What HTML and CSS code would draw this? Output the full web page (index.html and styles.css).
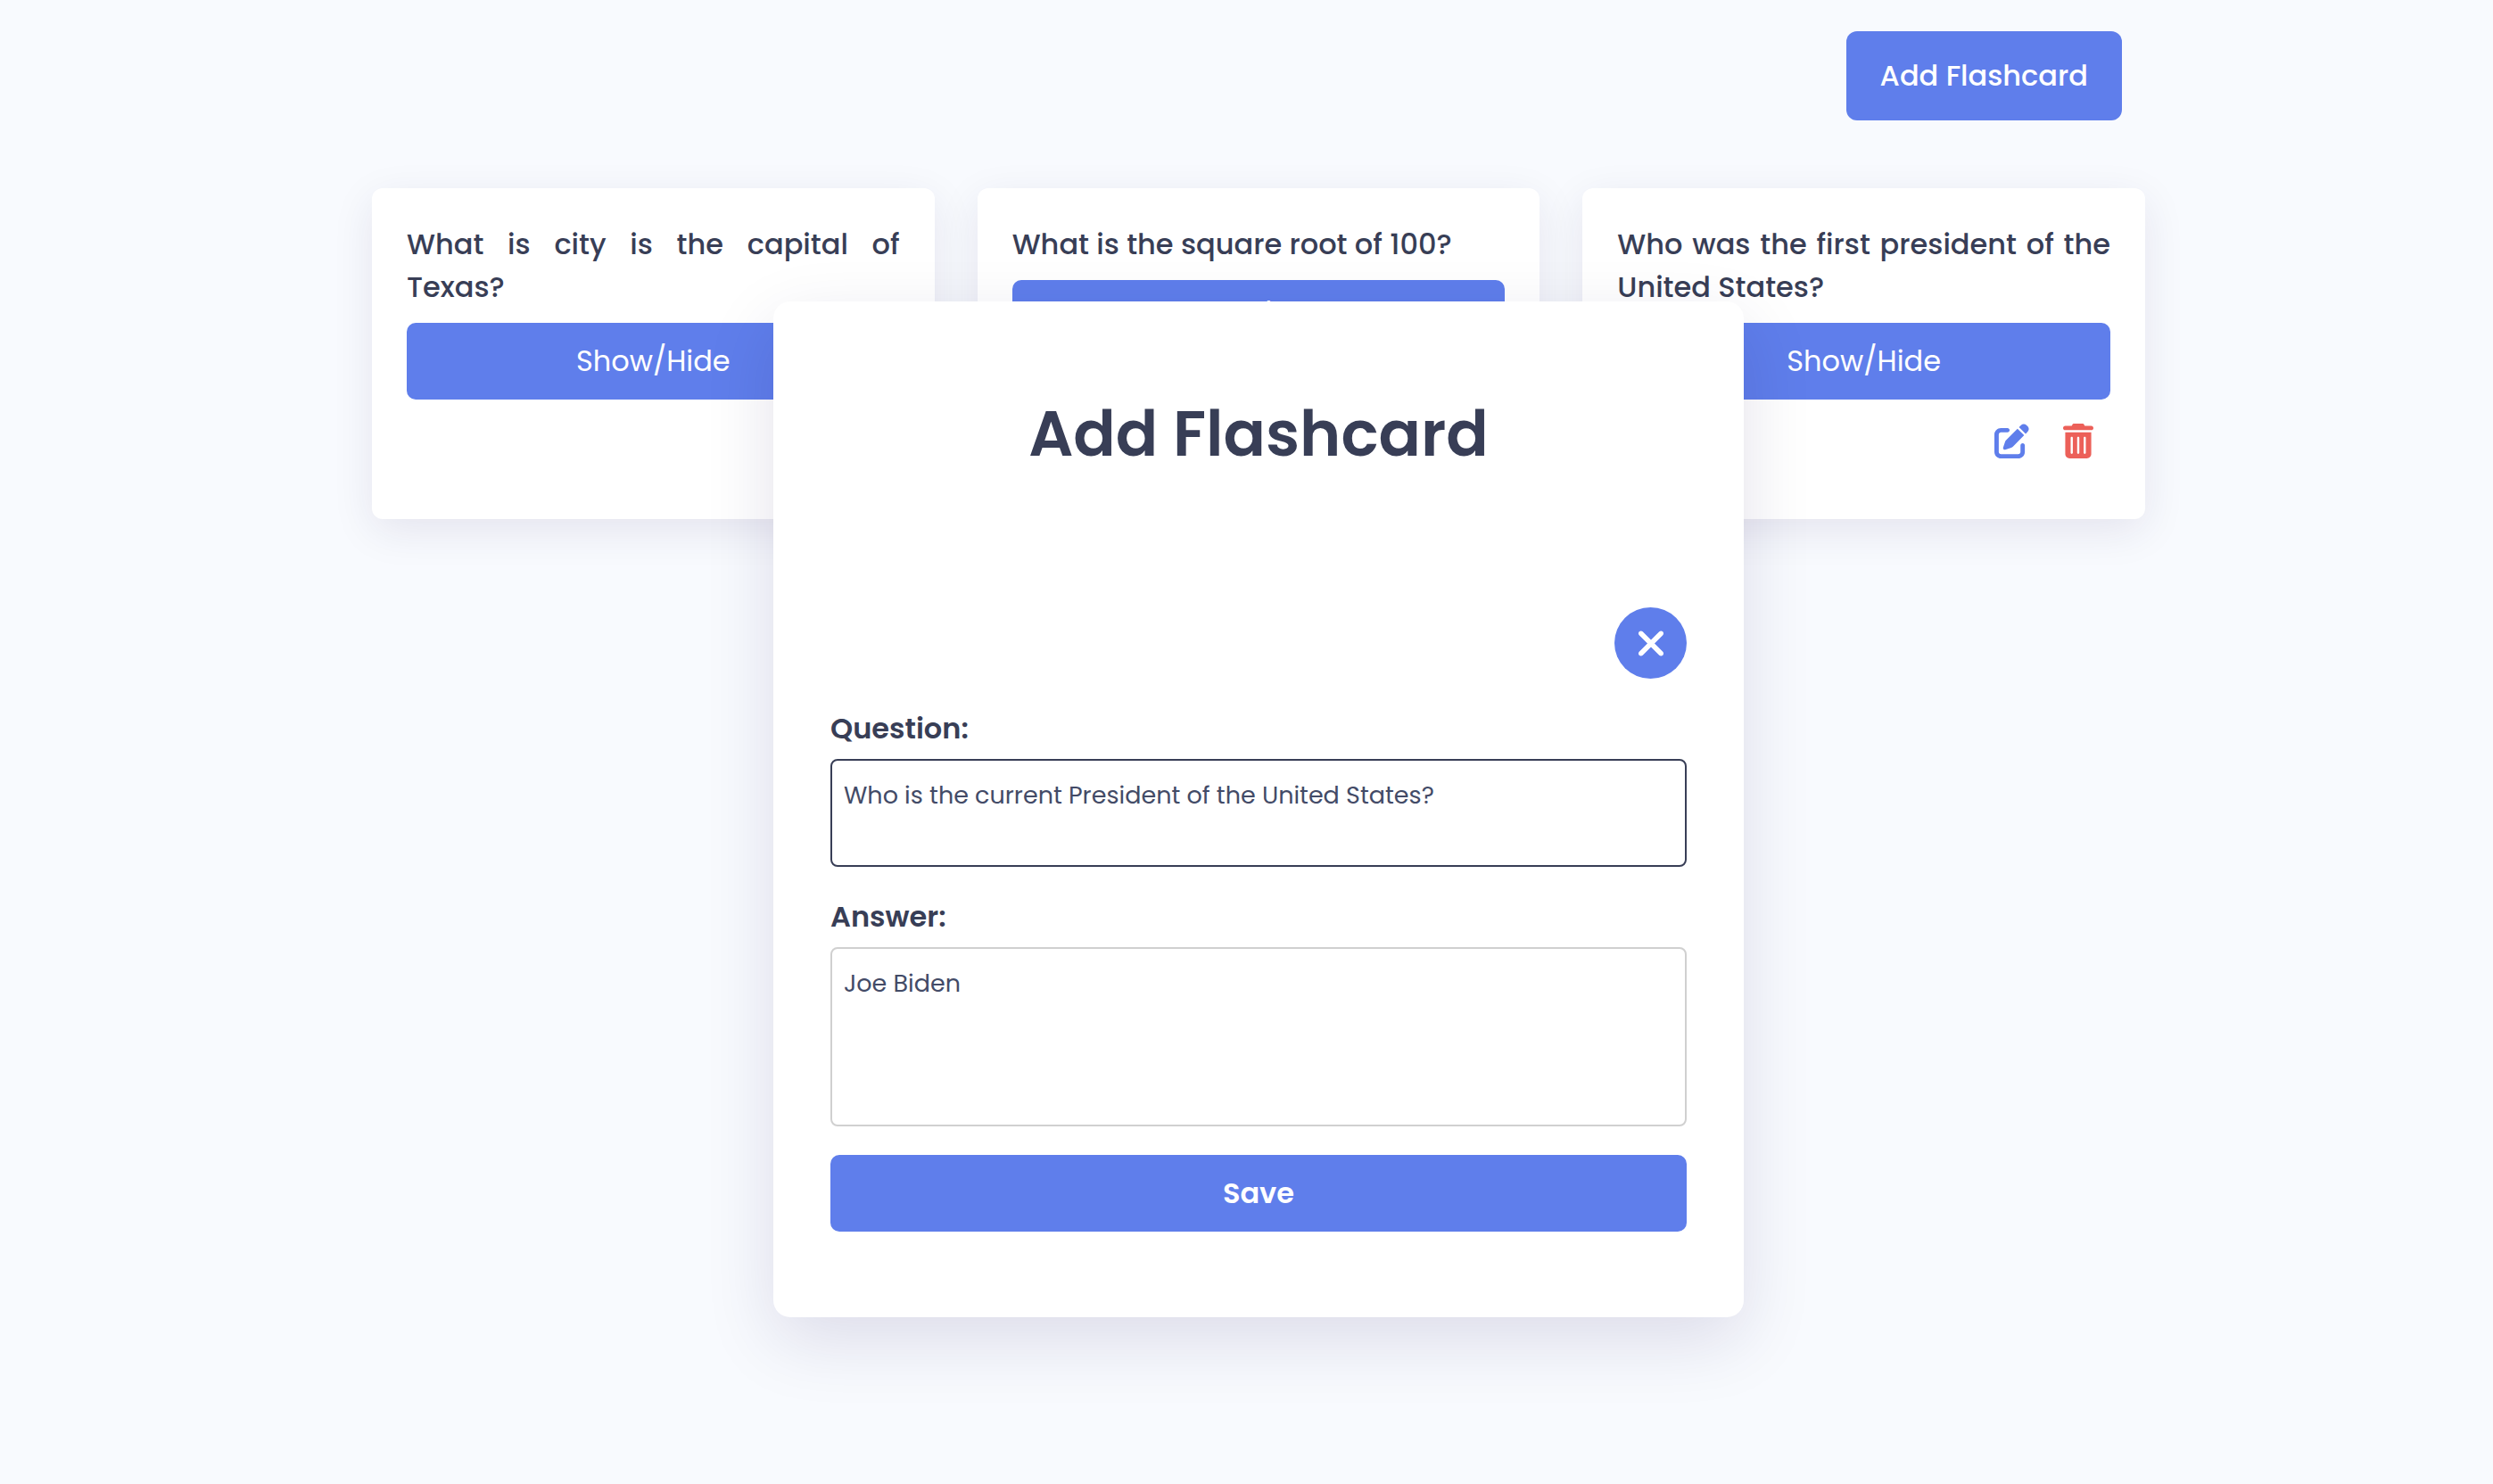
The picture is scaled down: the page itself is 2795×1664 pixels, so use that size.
FILE: index.html
```html
<!DOCTYPE html>
<html lang="en">
<head>
<meta charset="utf-8">
<meta name="viewport" content="width=device-width, initial-scale=1">
<title>Flashcards</title>
<link rel="stylesheet" href="styles.css">
</head>
<body>
<svg class="sprite" aria-hidden="true">
  <symbol id="icon-edit" viewBox="0 0 512 512"><path d="M471.6 21.7c-21.9-21.9-57.3-21.9-79.2 0L362.3 51.7l97.9 97.9 30.1-30.1c21.9-21.9 21.9-57.3 0-79.2L471.6 21.7zm-299.2 220c-6.1 6.1-10.8 13.6-13.5 21.9l-29.6 88.8c-2.9 8.6-.6 18.1 5.8 24.6s15.9 8.7 24.6 5.8l88.8-29.6c8.2-2.7 15.7-7.4 21.9-13.5L437.7 172.3 339.7 74.3 172.4 241.7zM96 64C43 64 0 107 0 160V416c0 53 43 96 96 96H352c53 0 96-43 96-96V320c0-17.7-14.3-32-32-32s-32 14.3-32 32v96c0 17.7-14.3 32-32 32H96c-17.7 0-32-14.3-32-32V160c0-17.7 14.3-32 32-32h96c17.7 0 32-14.3 32-32s-14.3-32-32-32H96z"/></symbol>
  <symbol id="icon-trash" viewBox="0 0 448 512"><path d="M135.2 17.7C140.6 6.8 151.7 0 163.8 0H284.2c12.1 0 23.2 6.8 28.6 17.7L320 32h96c17.7 0 32 14.3 32 32s-14.3 32-32 32H32C14.3 96 0 81.7 0 64S14.3 32 32 32h96l7.2-14.3zM32 128H416V448c0 35.3-28.7 64-64 64H96c-35.3 0-64-28.7-64-64V128zm96 64c-8.8 0-16 7.2-16 16V432c0 8.8 7.2 16 16 16s16-7.2 16-16V208c0-8.8-7.2-16-16-16zm96 0c-8.8 0-16 7.2-16 16V432c0 8.8 7.2 16 16 16s16-7.2 16-16V208c0-8.8-7.2-16-16-16zm96 0c-8.8 0-16 7.2-16 16V432c0 8.8 7.2 16 16 16s16-7.2 16-16V208c0-8.8-7.2-16-16-16z"/></symbol>
  <symbol id="icon-close" viewBox="0 0 384 512"><path d="M342.6 150.6c12.5-12.5 12.5-32.8 0-45.3s-32.8-12.5-45.3 0L192 210.7 86.6 105.4c-12.5-12.5-32.8-12.5-45.3 0s-12.5 32.8 0 45.3L146.7 256 41.4 361.4c-12.5 12.5-12.5 32.8 0 45.3s32.8 12.5 45.3 0L192 301.3 297.4 406.6c12.5 12.5 32.8 12.5 45.3 0s12.5-32.8 0-45.3L237.3 256 342.6 150.6z"/></symbol>
</svg>

<main class="page">
  <header class="toolbar">
    <button type="button" class="add-button">Add Flashcard</button>
  </header>
  <section class="cards">
    <article class="card">
      <p class="card-question">What is city is the capital of Texas?</p>
      <button type="button" class="toggle">Show/Hide</button>
      <div class="card-actions">
        <button type="button" class="icon-button edit" aria-label="Edit"><svg class="icon"><use href="#icon-edit"/></svg></button>
        <button type="button" class="icon-button delete" aria-label="Delete"><svg class="icon icon-narrow"><use href="#icon-trash"/></svg></button>
      </div>
    </article>
    <article class="card">
      <p class="card-question">What is the square root of 100?</p>
      <button type="button" class="toggle">Show/Hide</button>
      <div class="card-actions">
        <button type="button" class="icon-button edit" aria-label="Edit"><svg class="icon"><use href="#icon-edit"/></svg></button>
        <button type="button" class="icon-button delete" aria-label="Delete"><svg class="icon icon-narrow"><use href="#icon-trash"/></svg></button>
      </div>
    </article>
    <article class="card">
      <p class="card-question">Who was the first president of the United States?</p>
      <button type="button" class="toggle">Show/Hide</button>
      <div class="card-actions">
        <button type="button" class="icon-button edit" aria-label="Edit"><svg class="icon"><use href="#icon-edit"/></svg></button>
        <button type="button" class="icon-button delete" aria-label="Delete"><svg class="icon icon-narrow"><use href="#icon-trash"/></svg></button>
      </div>
    </article>
  </section>
</main>

<div class="overlay">
  <form class="modal" role="dialog" aria-labelledby="modal-title">
    <h2 class="modal-title" id="modal-title">Add Flashcard</h2>
    <button type="button" class="close" aria-label="Close"><svg class="close-icon"><use href="#icon-close"/></svg></button>
    <label class="field-label" for="question">Question:</label>
    <textarea class="field field-question" id="question">Who is the current President of the United States?</textarea>
    <label class="field-label" for="answer">Answer:</label>
    <textarea class="field field-answer" id="answer">Joe Biden</textarea>
    <button type="submit" class="save">Save</button>
  </form>
</div>
</body>
</html>
```
FILE: styles.css
```css
:root {
  --blue: #5f7eeb;
  --ink: #383e56;
  --line: 48px;
}

* {
  box-sizing: border-box;
  margin: 0;
  padding: 0;
}

body {
  min-height: 100vh;
  padding-left: 27px;
  position: relative;
  background: #f8fafe;
  color: var(--ink);
  font-family: Poppins, Inter, sans-serif;
  font-size: 32px;
  line-height: var(--line);
}

button,
textarea {
  border: none;
  font: inherit;
}

button {
  cursor: pointer;
}

.sprite {
  position: absolute;
  width: 0;
  height: 0;
}

.page {
  width: 90%;
  max-width: 1988px;
  margin: 0 auto;
  padding-top: 35px;
}

.toolbar {
  display: flex;
  justify-content: flex-end;
  padding-right: 26px;
  margin-bottom: 76px;
}

.add-button {
  padding: 26px 38px;
  border-radius: 12px;
  background: var(--blue);
  color: #fff;
  font-weight: 500;
}

.cards {
  display: grid;
  grid-template-columns: repeat(3, 1fr);
  gap: 48px;
}

.card {
  display: flex;
  flex-direction: column;
  padding: 39px;
  border-radius: 12px;
  background: #fff;
  box-shadow: 0 13px 48px rgba(28, 0, 80, 0.09);
}

.card-question {
  margin-bottom: 16px;
  font-weight: 500;
  text-align: justify;
}

.toggle {
  padding: 19px;
  border-radius: 10px;
  background: var(--blue);
  color: #fff;
}

.card-actions {
  display: flex;
  justify-content: flex-end;
  padding: 8px 0 10px;
}

.icon-button {
  display: flex;
  padding: 19px;
  background: none;
}

.edit {
  color: var(--blue);
}

.delete {
  color: #ec6059;
}

.icon {
  width: 39px;
  height: 39px;
  fill: currentColor;
}

.icon-narrow {
  width: 34px;
}

.overlay {
  position: absolute;
  inset: 0;
  display: flex;
  justify-content: center;
  align-items: flex-start;
  padding: 338px 0 0 27px;
}

.modal {
  display: flex;
  flex-direction: column;
  width: 90%;
  max-width: 1088px;
  padding: 96px 64px;
  border-radius: 19px;
  background: #fff;
  box-shadow: 0 26px 80px rgba(28, 0, 80, 0.12);
}

.modal-title {
  margin-bottom: 141px;
  font-size: 70px;
  font-weight: 600;
  line-height: 106px;
  text-align: center;
}

.close {
  display: flex;
  align-items: center;
  justify-content: center;
  align-self: flex-end;
  width: 81px;
  height: 80px;
  border-radius: 50%;
  background: var(--blue);
  color: #fff;
}

.close-icon {
  width: 34px;
  height: 45px;
  fill: currentColor;
}

.field-label {
  margin: 32px 0 10px;
  font-weight: 600;
}

.field {
  display: block;
  width: 100%;
  padding: 19px 13px;
  border: 2px solid #d0d0d0;
  border-radius: 8px;
  background: #fff;
  color: #434b67;
  font-size: 27px;
  line-height: 40px;
  resize: none;
  outline: none;
}

.field-question {
  height: 121px;
  border-color: var(--ink);
}

.field-answer {
  height: 201px;
  margin-bottom: 32px;
}

.save {
  padding: 19px;
  border-radius: 10px;
  background: var(--blue);
  color: #fff;
  font-weight: 600;
}
```
